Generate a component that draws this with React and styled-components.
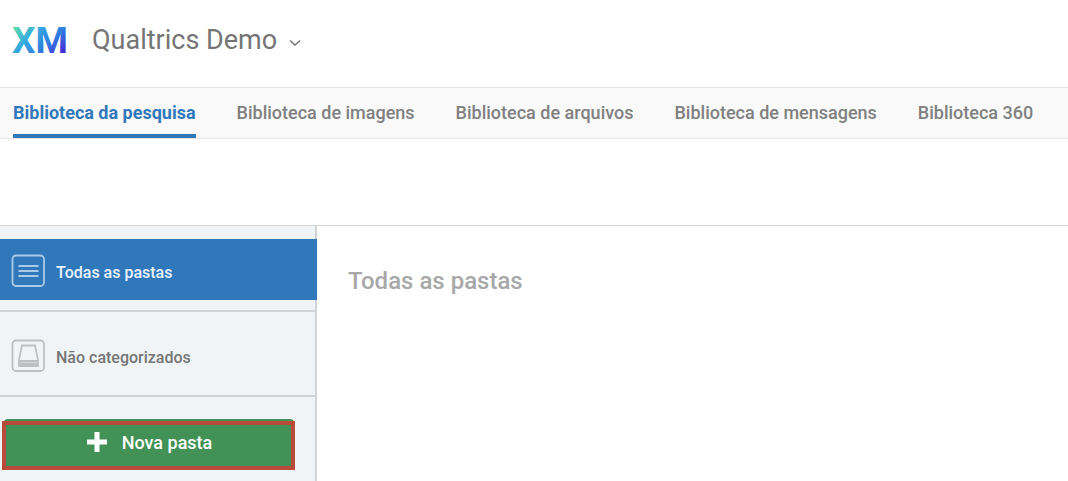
import React, { useState } from 'react';
import styled, { createGlobalStyle } from 'styled-components';

const colors = {
  blue: '#3178bb',
  green: '#429257',
  red: '#b84b39',
  text: '#757575',
  muted: '#a8a8a8',
  line: '#d2d3d4',
  sidebar: '#f0f4f7',
};

const tabs = [
  'Biblioteca da pesquisa',
  'Biblioteca de imagens',
  'Biblioteca de arquivos',
  'Biblioteca de mensagens',
  'Biblioteca 360',
];

const App = () => {
  const [tab, setTab] = useState(tabs[0]);
  const [folder, setFolder] = useState('Todas as pastas');

  return (
    <Page>
      <GlobalStyle />
      <Header>
        <Logo />
        <ProjectButton type="button">
          Qualtrics Demo
          <Chevron />
        </ProjectButton>
      </Header>
      <Nav>
        {tabs.map(t => (
          <Tab
            key={t}
            href="#"
            $active={t === tab}
            onClick={e => {
              e.preventDefault();
              setTab(t);
            }}
          >
            {t}
          </Tab>
        ))}
      </Nav>
      <Toolbar />
      <Body>
        <Sidebar>
          <Section>
            <Folder
              type="button"
              $active={folder === 'Todas as pastas'}
              onClick={() => setFolder('Todas as pastas')}
            >
              <ListIcon />
              <FolderName>Todas as pastas</FolderName>
            </Folder>
          </Section>
          <Section>
            <Folder
              type="button"
              $active={folder === 'Não categorizados'}
              onClick={() => setFolder('Não categorizados')}
            >
              <TrayIcon />
              <FolderName>Não categorizados</FolderName>
            </Folder>
          </Section>
          <Actions>
            <NewFolder type="button">
              <PlusIcon />
              Nova pasta
              <Highlight />
            </NewFolder>
          </Actions>
        </Sidebar>
        <Main>
          <Title>{folder}</Title>
        </Main>
      </Body>
    </Page>
  );
};

const Logo = () => (
  <LogoMark width="52" height="32" viewBox="0 0 52 32" role="img" aria-label="XM">
    <defs>
      <linearGradient
        id="xm"
        gradientUnits="userSpaceOnUse"
        x1="6"
        y1="-4"
        x2="44"
        y2="36"
      >
        <stop offset="0" stopColor="#62e0a6" />
        <stop offset="0.35" stopColor="#35a9e0" />
        <stop offset="0.65" stopColor="#2f7fe0" />
        <stop offset="1" stopColor="#4a22d8" />
      </linearGradient>
    </defs>
    <LogoText x="26" y="29" textAnchor="middle">
      XM
    </LogoText>
  </LogoMark>
);

const Chevron = () => (
  <svg width="12" height="8" viewBox="0 0 12 8" fill="none" aria-hidden="true">
    <path d="M1 1.5 L6 6 L11 1.5" stroke="#757575" strokeWidth="1.5" />
  </svg>
);

const ListIcon = () => (
  <svg width="34" height="34" viewBox="0 0 34 34" fill="none" aria-hidden="true">
    <g stroke="#a9cbe8" strokeWidth="1.8">
      <rect x="1.5" y="1.5" width="31.5" height="30.5" rx="3.5" />
      <path d="M7.5 12 H27.5 M7.5 17 H27.5 M7.5 22 H27.5" />
    </g>
  </svg>
);

const TrayIcon = () => (
  <svg width="34" height="34" viewBox="0 0 34 34" fill="none" aria-hidden="true">
    <g stroke="#bdbfc1" strokeWidth="1.8">
      <rect x="1.5" y="1.5" width="31.5" height="30.5" rx="3.5" />
      <path d="M11 6.5 H24 L27 21 V27 H8 V21 Z" />
    </g>
    <path d="M8 21 H27 V27 H8 Z" fill="#bdbfc1" />
    <path d="M9 23.5 H26" stroke="#d5d8da" />
  </svg>
);

const PlusIcon = () => (
  <svg width="22" height="22" viewBox="0 0 22 22" aria-hidden="true">
    <path d="M11 1 V21 M1 11 H21" stroke="#fff" strokeWidth="5" />
  </svg>
);

const GlobalStyle = createGlobalStyle`
  * {
    box-sizing: border-box;
  }

  body {
    margin: 0;
    background: #fff;
    color: ${colors.text};
    font-family: Roboto, "Liberation Sans", sans-serif;
  }

  button {
    font-family: inherit;
    cursor: pointer;
  }
`;

const LogoMark = styled.svg`
  overflow: visible;
`;

const LogoText = styled.text`
  fill: url(#xm);
  font-family: Roboto, sans-serif;
  font-size: 37px;
  font-weight: 700;
`;

const Page = styled.div`
  display: flex;
  flex-direction: column;
  min-height: 100vh;
`;

const Header = styled.header`
  display: flex;
  align-items: center;
  gap: 26px;
  padding: 24px 14px 31px;
`;

const ProjectButton = styled.button`
  display: flex;
  align-items: center;
  gap: 12px;
  padding: 0;
  border: none;
  background: none;
  color: ${colors.text};
  font-size: 27px;
  line-height: 32px;

  svg {
    margin-top: 6px;
  }
`;

const Nav = styled.nav`
  display: flex;
  gap: 41px;
  padding: 0 13px;
  border-top: 1px solid #e6e6e6;
  border-bottom: 1px solid #e6e6e6;
  background: #f9f9f9;
`;

const Tab = styled.a`
  padding: 15px 0 11px;
  border-bottom: 4px solid ${p => (p.$active ? colors.blue : 'transparent')};
  color: ${p => (p.$active ? colors.blue : '#808080')};
  font-size: 18px;
  font-weight: ${p => (p.$active ? 700 : 500)};
  line-height: 20px;
  text-decoration: none;
  white-space: nowrap;
`;

const Toolbar = styled.div`
  height: 86px;
`;

const Body = styled.div`
  display: flex;
  flex: 1;
  border-top: 1px solid ${colors.line};
`;

const Sidebar = styled.aside`
  flex: 0 0 317px;
  padding-top: 1px;
  border-right: 2px solid ${colors.line};
  background: ${colors.sidebar};
`;

const Section = styled.div`
  padding: 12px 0 10px;
  border-bottom: 2px solid ${colors.line};
`;

const Folder = styled.button`
  display: flex;
  align-items: center;
  gap: 11px;
  width: calc(100% + 2px);
  height: 61px;
  padding: 2px 11px 0;
  border: none;
  background: ${p => (p.$active ? colors.blue : 'transparent')};
  color: ${p => (p.$active ? '#eaf3fa' : colors.text)};
  font-size: 16px;
  font-weight: 500;
`;

const FolderName = styled.span`
  padding-top: 3px;
`;

const Actions = styled.div`
  padding: 22px 21px 12px 4px;
`;

const NewFolder = styled.button`
  position: relative;
  display: flex;
  align-items: center;
  justify-content: center;
  gap: 14px;
  width: 100%;
  height: 48px;
  padding: 0 6px 2px;
  border: none;
  border-radius: 4px;
  background: ${colors.green};
  color: #fff;
  font-size: 18px;
  font-weight: 500;
`;

const Highlight = styled.span`
  position: absolute;
  top: 2px;
  right: -1px;
  bottom: -3px;
  left: -2px;
  border: 4px solid ${colors.red};
`;

const Main = styled.main`
  flex: 1;
  padding: 39px 31px;
`;

const Title = styled.h1`
  margin: 0;
  color: ${colors.muted};
  font-size: 24px;
  font-weight: 500;
  line-height: 32px;
`;

export default App;
